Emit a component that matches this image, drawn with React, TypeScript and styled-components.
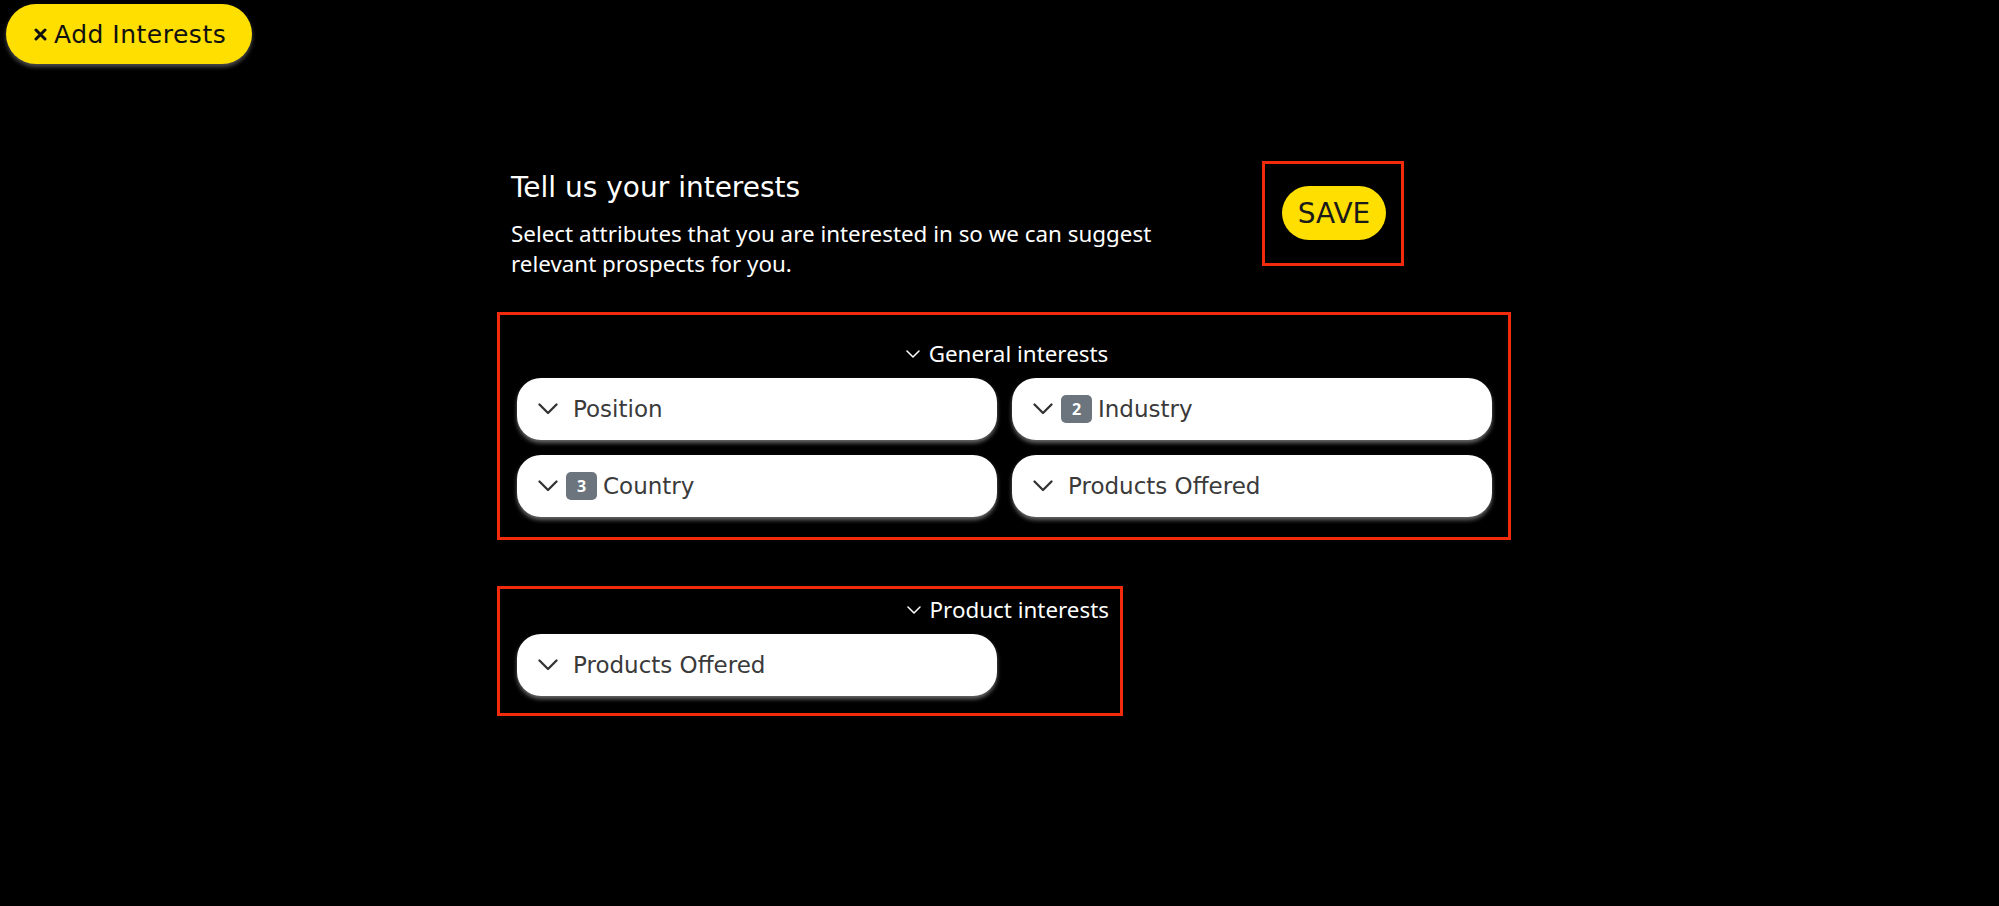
import React from 'react';
import styled, { createGlobalStyle } from 'styled-components';

const GlobalStyle = createGlobalStyle`
  html, body {
    margin: 0;
    padding: 0;
    background: #000;
  }
  body {
    min-height: 906px;
    font-family: 'Noto Sans', 'Open Sans', sans-serif;
  }
`

const Page = styled.div`
  background: #000;
  min-height: 906px;
  padding: 4px 0 0 6px;
  box-sizing: border-box;
`

const AddButton = styled.button`
  display: flex;
  align-items: center;
  gap: 7px;
  height: 60px;
  padding: 0 26px 0 28px;
  border: none;
  border-radius: 30px;
  background: #ffdf00;
  color: #111;
  font-family: 'DejaVu Sans', 'Liberation Sans', sans-serif;
  font-size: 25px;
  letter-spacing: 0.5px;
  box-shadow: 0 3px 4px rgba(110, 110, 110, 0.7);
  cursor: pointer;
`

const Main = styled.div`
  display: flex;
  justify-content: center;
  padding-left: 3px;
  margin-top: 97px;
`

const Column = styled.div`
  width: 1014px;
  display: flex;
  flex-direction: column;
  align-items: flex-start;
`

const Header = styled.div`
  display: flex;
  align-items: flex-start;
  padding-left: 14px;
  margin-bottom: 33px;
`

const Intro = styled.div`
  width: 690px;
  padding-top: 11px;
`

const Title = styled.h2`
  margin: 0 0 15px;
  color: #fff;
  font-family: 'DejaVu Sans', 'Liberation Sans', sans-serif;
  font-size: 28px;
  font-weight: 400;
  line-height: 32px;
`

const Description = styled.p`
  margin: 0;
  color: #fff;
  font-family: 'Noto Sans', sans-serif;
  font-size: 22.4px;
  line-height: 30px;
`

const SaveFrame = styled.div`
  margin-left: 61px;
  padding: 22px 15px 23px 17px;
  border: 3px solid #f12b0c;
`

const SaveButton = styled.button`
  height: 54px;
  width: 104px;
  padding: 0;
  border: none;
  border-radius: 27px;
  background: #ffdf00;
  color: #1a1a1a;
  font-family: 'DejaVu Sans', 'Liberation Sans', sans-serif;
  font-size: 28px;
  cursor: pointer;
`

const Group = styled.section<{ $top: number; $bottom: number; $width: number }>`
  width: ${p => p.$width}px;
  box-sizing: border-box;
  border: 3px solid #f12b0c;
  padding: ${p => p.$top}px 11px ${p => p.$bottom}px 17px;
  margin-bottom: 46px;
`

const GroupTitle = styled.div<{ $align: 'center' | 'flex-end' }>`
  display: flex;
  align-items: center;
  justify-content: ${p => p.$align};
  gap: 9px;
  margin-bottom: 9px;
  color: #fff;
  font-family: 'Noto Sans', sans-serif;
  font-size: 22.4px;
  line-height: 30px;
`

const Grid = styled.div<{ $cols: number }>`
  display: grid;
  grid-template-columns: repeat(${p => p.$cols}, 480px);
  gap: 15px;
`

const Card = styled.div`
  display: flex;
  align-items: center;
  height: 62px;
  padding-left: 21px;
  border-radius: 24px;
  background: #fff;
  box-shadow: 0 3px 4px rgba(190, 190, 190, 0.55);
  color: #3a3a3a;
  font-family: 'DejaVu Sans', 'Liberation Sans', sans-serif;
  font-size: 23px;
`

const Chevron = styled.svg`
  flex: none;
`

const Badge = styled.span`
  display: inline-flex;
  align-items: center;
  justify-content: center;
  width: 31px;
  height: 28px;
  margin: 0 6px 0 8px;
  border-radius: 5px;
  background: #6c757d;
  color: #fff;
  font-family: 'Open Sans', sans-serif;
  font-size: 16px;
  font-weight: 700;
`

const Label = styled.span<{ $plain: boolean }>`
  margin-left: ${p => (p.$plain ? 15 : 0)}px;
`

const CardChevron = () => (
  <Chevron width="20" height="12" viewBox="0 0 20 12">
    <path d="M1.5 1.5 L10 10 L18.5 1.5" fill="none" stroke="#333" strokeWidth="2.3" strokeLinecap="round" strokeLinejoin="round" />
  </Chevron>
)

const TitleChevron = () => (
  <Chevron width="14" height="8" viewBox="0 0 14 8">
    <path d="M1 1 L7 7 L13 1" fill="none" stroke="#fff" strokeWidth="1.5" strokeLinecap="round" strokeLinejoin="round" />
  </Chevron>
)

type Item = { label: string; count?: number }

const FilterCard: React.FC<Item> = ({ label, count }) => (
  <Card>
    <CardChevron />
    {count ? <Badge>{count}</Badge> : null}
    <Label $plain={!count}>{label}</Label>
  </Card>
)

const general: Item[] = [
  { label: 'Position' },
  { label: 'Industry', count: 2 },
  { label: 'Country', count: 3 },
  { label: 'Products Offered' },
]

const product: Item[] = [{ label: 'Products Offered' }]

const App: React.FC = () => {
  return (
    <Page>
      <GlobalStyle />
      <AddButton>
        <svg width="13" height="13" viewBox="0 0 13 13">
          <path d="M2 2 L11 11 M11 2 L2 11" stroke="#111" strokeWidth="3" strokeLinecap="round" />
        </svg>
        Add Interests
      </AddButton>
      <Main>
        <Column>
          <Header>
            <Intro>
              <Title>Tell us your interests</Title>
              <Description>
                Select attributes that you are interested in so we can suggest relevant prospects for you.
              </Description>
            </Intro>
            <SaveFrame>
              <SaveButton>SAVE</SaveButton>
            </SaveFrame>
          </Header>

          <Group $top={24} $bottom={20} $width={1014}>
            <GroupTitle $align="center">
              <TitleChevron />
              General interests
            </GroupTitle>
            <Grid $cols={2}>
              {general.map(item => (
                <FilterCard key={item.label} {...item} />
              ))}
            </Grid>
          </Group>

          <Group $top={6} $bottom={17} $width={626}>
            <GroupTitle $align="flex-end">
              <TitleChevron />
              Product interests
            </GroupTitle>
            <Grid $cols={1}>
              {product.map(item => (
                <FilterCard key={item.label} {...item} />
              ))}
            </Grid>
          </Group>
        </Column>
      </Main>
    </Page>
  );
}

export default App;
